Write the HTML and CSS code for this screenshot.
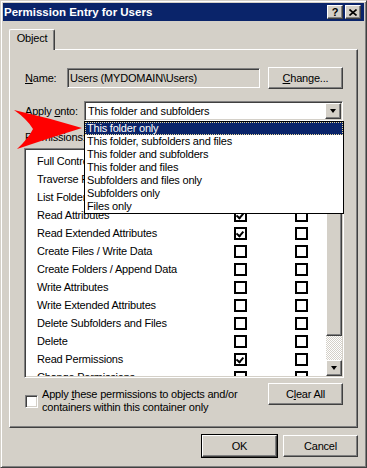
FILE: index.html
```html
<!DOCTYPE html>
<html lang="en">
<head>
  <meta charset="UTF-8">
  <title>Permission Entry for Users</title>
  <link rel="stylesheet" href="styles.css">
</head>
<body>

  <div class="window">
    <!-- title bar -->
    <div class="titlebar">
      <span class="title">Permission Entry for Users</span>
      <div class="title-btns">
        <span class="tbtn help">?</span>
        <span class="tbtn">
          <svg width="8" height="7" viewBox="0 0 8 7"><path d="M0.5 0.5 L7.5 6.5 M7.5 0.5 L0.5 6.5" stroke="#000" stroke-width="1.6"/></svg>
        </span>
      </div>
    </div>

    <div class="content">
      <div class="tabs">
        <div class="tab">Object</div>
      </div>

      <div class="panel">
        <div class="row name-row">
          <span class="lbl name-lbl"><u>N</u>ame:</span>
          <div class="field">Users (MYDOMAIN\Users)</div>
          <button class="btn change-btn"><u>C</u>hange...</button>
        </div>

        <div class="row apply-row">
          <span class="lbl apply-lbl">Apply <u>o</u>nto:</span>
          <div class="combo">
            <span class="combo-text">This folder and subfolders</span>
            <span class="btn combo-btn"><i class="tri"></i></span>

            <ul class="dropdown">
              <li class="sel">This folder only</li>
              <li>This folder, subfolders and files</li>
              <li>This folder and subfolders</li>
              <li>This folder and files</li>
              <li>Subfolders and files only</li>
              <li>Subfolders only</li>
              <li>Files only</li>
            </ul>
          </div>
        </div>

        <div class="perm-lbl"><u>P</u>ermissions:</div>

        <div class="listbox">
          <div class="items">
            <div class="item"><span>Full Control</span><i class="cb"></i><i class="cb"></i></div>
            <div class="item"><span>Traverse Folder / Execute File</span><i class="cb on"></i><i class="cb"></i></div>
            <div class="item"><span>List Folder / Read Data</span><i class="cb on"></i><i class="cb"></i></div>
            <div class="item"><span>Read Attributes</span><i class="cb on"></i><i class="cb"></i></div>
            <div class="item"><span>Read Extended Attributes</span><i class="cb on"></i><i class="cb"></i></div>
            <div class="item"><span>Create Files / Write Data</span><i class="cb"></i><i class="cb"></i></div>
            <div class="item"><span>Create Folders / Append Data</span><i class="cb"></i><i class="cb"></i></div>
            <div class="item"><span>Write Attributes</span><i class="cb"></i><i class="cb"></i></div>
            <div class="item"><span>Write Extended Attributes</span><i class="cb"></i><i class="cb"></i></div>
            <div class="item"><span>Delete Subfolders and Files</span><i class="cb"></i><i class="cb"></i></div>
            <div class="item"><span>Delete</span><i class="cb"></i><i class="cb"></i></div>
            <div class="item"><span>Read Permissions</span><i class="cb on"></i><i class="cb"></i></div>
            <div class="item"><span>Change Permissions</span><i class="cb"></i><i class="cb"></i></div>
            <div class="item"><span>Take Ownership</span><i class="cb"></i><i class="cb"></i></div>
          </div>
          <div class="scrollbar">
            <span class="btn sb-btn"><i class="tri up"></i></span>
            <span class="btn thumb"></span>
            <span class="track"></span>
            <span class="btn sb-btn"><i class="tri"></i></span>
          </div>
        </div>

        <div class="bottom-row">
          <label class="apply-check">
            <i class="sunken-cb"></i>
            <span class="apply-text">Apply <u>t</u>hese permissions to objects and/or<br>containers within this container only</span>
          </label>
          <button class="btn">C<u>l</u>ear All</button>
        </div>
      </div>

      <div class="footer">
        <button class="btn default">OK</button>
        <button class="btn">Cancel</button>
      </div>
    </div>

    <!-- red pointer drawn over the dialog -->
    <svg class="arrow" width="100" height="160" viewBox="0 0 100 160">
      <path d="M13 109 Q48 117 81 127 Q48 137 16 148 Q27 138 32 128 Q26 118 13 109 Z" fill="#ff0000"/>
    </svg>
  </div>

</body>
</html>
```

FILE: styles.css
```css
* {
  box-sizing: border-box;
}

body {
  margin: 0;
  font-family: "Liberation Sans", Arial, sans-serif;
  font-size: 11px;
  letter-spacing: -0.2px;
  color: #000;
  background: #d4d0c8;
}

u {
  text-decoration: underline;
  text-underline-offset: 1px;
}

.window {
  position: relative;
  width: 367px;
  height: 468px;
  background: #d4d0c8;
  border: 1px solid;
  border-color: #d4d0c8 #404040 #404040 #d4d0c8;
  box-shadow: inset 1px 1px #fff, inset -1px -1px #808080;
  padding: 2px;
}

/* title bar */
.titlebar {
  height: 18px;
  background: #0a246a;
  display: flex;
  align-items: center;
  justify-content: space-between;
  padding: 0 3px 0 1px;
}

.title {
  color: #fff;
  font-weight: bold;
  font-size: 11.5px;
  letter-spacing: 0;
}

.title-btns {
  display: flex;
  gap: 2px;
}

.tbtn {
  width: 16px;
  height: 14px;
  display: flex;
  align-items: center;
  justify-content: center;
  background: #d4d0c8;
  border: 1px solid;
  border-color: #fff #404040 #404040 #fff;
  box-shadow: inset -1px -1px #808080;
}

.tbtn.help {
  font-weight: bold;
  font-size: 11px;
  line-height: 12px;
  letter-spacing: 0;
}

/* classic 3d button */
.btn {
  font-family: inherit;
  font-size: 11px;
  letter-spacing: -0.2px;
  color: #000;
  background: #d4d0c8;
  border: 1px solid;
  border-color: #fff #404040 #404040 #fff;
  box-shadow: inset -1px -1px #808080;
  padding: 0;
  width: 75px;
  height: 22px;
}

.btn.default {
  outline: 1px solid #000;
  outline-offset: 0;
}

.content {
  padding: 8px 6px 0 6px;
}

/* tab control */
.tabs {
  display: flex;
  height: 20px;
}

.tab {
  position: relative;
  z-index: 1;
  width: 46px;
  height: 21px;
  padding-top: 2px;
  line-height: 13px;
  text-align: center;
  background: #d4d0c8;
  border-top: 1px solid #fff;
  border-left: 1px solid #fff;
  border-right: 1px solid #404040;
  box-shadow: inset -1px 0 #808080;
  border-top-left-radius: 2px;
  border-top-right-radius: 2px;
}

.panel {
  height: 379px;
  border: 1px solid;
  border-color: #fff #404040 #404040 #fff;
  box-shadow: inset -1px -1px #808080;
  padding: 17px 14px 0 15px;
}

.row {
  display: flex;
  align-items: center;
}

.name-row {
  height: 22px;
}

.name-lbl {
  width: 42px;
}

.field {
  width: 193px;
  height: 20px;
  margin-right: 8px;
  padding: 1px 0 0 2px;
  line-height: 16px;
  border: 1px solid;
  border-color: #808080 #fff #fff #808080;
  box-shadow: inset 1px 1px #404040, inset -1px -1px #d4d0c8;
}

.apply-row {
  margin-top: 12px;
  height: 20px;
}

.apply-lbl {
  width: 59px;
}

.combo {
  position: relative;
  width: 259px;
  height: 20px;
  background: #fff;
  border: 1px solid;
  border-color: #808080 #fff #fff #808080;
  box-shadow: inset 1px 1px #404040, inset -1px -1px #d4d0c8;
  padding: 1px 1px 1px 3px;
  display: flex;
  align-items: center;
  justify-content: space-between;
}

.combo-btn {
  width: 16px;
  height: 16px;
  display: flex;
  align-items: center;
  justify-content: center;
}

.tri {
  width: 0;
  height: 0;
  border-left: 3.5px solid transparent;
  border-right: 3.5px solid transparent;
  border-top: 4px solid #000;
}

.tri.up {
  border-top: 0;
  border-bottom: 4px solid #000;
}

.dropdown {
  position: absolute;
  z-index: 5;
  top: 19px;
  left: -1px;
  width: 260px;
  margin: 0;
  padding: 0;
  list-style: none;
  background: #fff;
  border: 1px solid #000;
}

.dropdown li {
  height: 13px;
  line-height: 13px;
  padding-left: 2px;
}

.dropdown li.sel {
  background: #0a246a;
  color: #fff;
  outline: 1px dotted #e8d89a;
  outline-offset: -1px;
}

.perm-lbl {
  margin-top: 10px;
  line-height: 13px;
}

/* permission list */
.listbox {
  margin: 4px 0 0 -1px;
  width: 320px;
  height: 230px;
  display: flex;
  border: 1px solid;
  border-color: #808080 #fff #fff #808080;
  box-shadow: inset 1px 1px #404040, inset -1px -1px #d4d0c8;
  padding: 1px;
}

.items {
  flex: 1;
  overflow: hidden;
  background: #fff;
  padding-top: 2px;
}

.item {
  display: grid;
  grid-template-columns: 208px 61px 13px;
  align-items: center;
  height: 18px;
}

.item span {
  padding-left: 11px;
  white-space: nowrap;
}

.cb {
  display: block;
  position: relative;
  width: 13px;
  height: 13px;
  border: 2px solid #000;
  background: #fff;
}

.cb.on::after {
  content: "";
  position: absolute;
  left: 1px;
  top: 2px;
  width: 5px;
  height: 3px;
  border-left: 2px solid #000;
  border-bottom: 2px solid #000;
  transform: rotate(-50deg);
  transform-origin: 3px 3px;
}

.scrollbar {
  width: 16px;
  display: flex;
  flex-direction: column;
}

.sb-btn {
  width: 16px;
  height: 16px;
  display: flex;
  align-items: center;
  justify-content: center;
}

.thumb {
  width: 16px;
  height: 170px;
}

.track {
  flex: 1;
  background: repeating-conic-gradient(#fff 0 25%, #d4d0c8 0 50%) 0 0 / 2px 2px;
}

.bottom-row {
  margin-top: 5px;
  display: flex;
  justify-content: space-between;
  align-items: flex-start;
}

.apply-check {
  display: flex;
  align-items: center;
  gap: 4px;
  margin-top: 5px;
}

.apply-text {
  line-height: 13px;
}

.sunken-cb {
  display: block;
  width: 13px;
  height: 13px;
  background: #fff;
  border: 1px solid;
  border-color: #808080 #fff #fff #808080;
  box-shadow: inset 1px 1px #404040, inset -1px -1px #d4d0c8;
}

.footer {
  margin-top: 7px;
  display: flex;
  justify-content: flex-end;
  gap: 6px;
}

.arrow {
  position: absolute;
  left: 0;
  top: 0;
  z-index: 10;
  pointer-events: none;
}
```
